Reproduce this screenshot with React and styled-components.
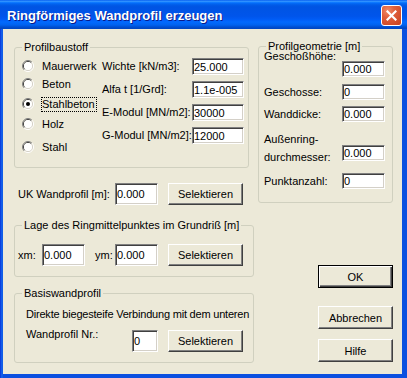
import React from 'react';
import styled, { createGlobalStyle } from 'styled-components';

const GlobalStyle = createGlobalStyle`
  html, body {
    margin: 0;
    padding: 0;
    background: #ffffff;
  }
  body {
    font-family: "Liberation Sans", Arial, sans-serif;
    font-size: 11px;
    color: #000;
  }
`;

const Window = styled.div`
  width: 407px;
  height: 378px;
  display: flex;
  flex-direction: column;
  background: linear-gradient(to right, #0831d9 0, #166aee 2px, #0b50e0 3px);
  box-sizing: border-box;
`;

const TitleBar = styled.div`
  height: 29px;
  flex: none;
  display: flex;
  align-items: center;
  justify-content: space-between;
  padding: 0 5px 0 7px;
  background: linear-gradient(
    to bottom,
    #0058ee 0%,
    #3593ff 4%,
    #288eff 6%,
    #127dff 8%,
    #036ffc 10%,
    #0262ee 14%,
    #0057e5 20%,
    #0054e3 24%,
    #0055eb 56%,
    #005bf5 66%,
    #026afe 76%,
    #0062ef 86%,
    #0052d6 92%,
    #0049c8 96%,
    #0046c0 100%
  );
`;

const Title = styled.span`
  color: #fff;
  font: bold 13px "Liberation Sans", Arial, sans-serif;
  text-shadow: 1px 1px 0 #0a1a8a;
  margin-top: 1px;
`;

const CloseButton = styled.div`
  width: 21px;
  height: 21px;
  box-sizing: border-box;
  border: 1px solid #fff;
  border-radius: 3px;
  background: radial-gradient(circle at 30% 25%, #f08c6a 0%, #e0603c 35%, #c8401f 100%);
  display: flex;
  align-items: center;
  justify-content: center;
  margin-top: 1px;
`;

const Client = styled.div`
  flex: 1;
  margin: 0 5px 4px 3px;
  background: #ece9d8;
  display: flex;
  gap: 4px;
  padding: 11px 0 0 11px;
`;

const LeftColumn = styled.div`
  width: 240px;
  display: flex;
  flex-direction: column;
  margin-top: 1px;
`;

const RightColumn = styled.div`
  width: 135px;
  display: flex;
  flex-direction: column;
`;

const Group = styled.fieldset`
  margin: ${p => p.$mt || 0}px 0 0 0;
  padding: 0;
  min-width: 0;
  box-sizing: border-box;
  width: ${p => p.$w}px;
  height: ${p => p.$h}px;
  border: 1px solid #d0d0bf;
  border-radius: 3px;
`;

const Legend = styled.legend`
  margin-left: 7px;
  padding: 0 2px;
  line-height: 13px;
  font-size: 11px;
`;

const MaterialBody = styled.div`
  display: flex;
  padding-left: 7px;
`;

const RadioList = styled.div`
  width: 80px;
  display: flex;
  flex-direction: column;
`;

const RadioRow = styled.div`
  height: 16px;
  margin-top: ${p => p.$mt}px;
  display: flex;
  align-items: center;
  gap: 7px;
`;

const RadioLabel = styled.span`
  line-height: 13px;
  border: 1px ${p => (p.$focus ? 'dotted #000' : 'solid transparent')};
  padding: 0 1px 0 0;
  white-space: nowrap;
`;

const FieldGrid = styled.div`
  display: grid;
  grid-template-columns: 90px 52px;
  grid-auto-rows: 17px;
  row-gap: 6px;
  margin-top: 4px;
  align-items: center;
`;

const Label = styled.span`
  line-height: 13px;
  white-space: nowrap;
`;

const Field = styled.input`
  box-sizing: border-box;
  width: ${p => p.$w || 43}px;
  height: ${p => p.$h || 17}px;
  margin: 0;
  padding: 0 0 0 1px;
  font: 11px "Liberation Sans", Arial, sans-serif;
  color: #000;
  background: #fff;
  border: 1px solid;
  border-color: #808080 #fff #fff #808080;
  box-shadow: inset 1px 1px 0 #404040, inset -1px -1px 0 #d4d0c8;
  outline: none;
`;

const GeoBody = styled.div`
  display: flex;
  flex-direction: column;
  padding-left: 5px;
`;

const GeoRow = styled.div`
  display: grid;
  grid-template-columns: 78px 43px;
  align-items: center;
  margin-top: ${p => p.$mt}px;
`;

const GeoLabel = styled.span`
  line-height: ${p => (p.$tall ? 18 : 13)}px;
  white-space: nowrap;
  align-self: ${p => (p.$up ? 'start' : 'center')};
  margin-top: ${p => (p.$up ? -11 : 0)}px;
`;

const GeoField = styled(Field)`
  align-self: ${p => (p.$tall ? 'end' : 'center')};
  margin-bottom: ${p => (p.$tall ? 5 : 0)}px;
`;

const LineRow = styled.div`
  display: flex;
  align-items: center;
  height: 22px;
  margin-top: ${p => p.$mt || 0}px;
  padding-left: ${p => p.$pl || 0}px;
`;

const RowLabel = styled.span`
  width: ${p => p.$w}px;
  flex: none;
  line-height: 13px;
  white-space: nowrap;
  align-self: ${p => (p.$top ? 'flex-start' : 'center')};
  margin-top: ${p => (p.$top ? -2 : 0)}px;
`;

const Spacer = styled.span`
  width: ${p => p.$w}px;
  flex: none;
`;

const Button = styled.button`
  box-sizing: border-box;
  width: 75px;
  height: ${p => p.$h || 22}px;
  margin: ${p => p.$mt || 0}px 0 0 0;
  padding: 0;
  flex: none;
  font: 11px "Liberation Sans", Arial, sans-serif;
  color: #000;
  background: #ece9d8;
  border: 1px solid;
  border-color: ${p => (p.$default ? '#000' : '#fff #404040 #404040 #fff')};
  box-shadow: ${p =>
    p.$default
      ? 'inset 1px 1px 0 #fff, inset -1px -1px 0 #404040, inset -2px -2px 0 #808080'
      : 'inset -1px -1px 0 #808080'};
  align-self: ${p => (p.$right ? 'flex-end' : 'auto')};
`;

const BasisBody = styled.div`
  display: flex;
  flex-direction: column;
  padding-left: 11px;
`;

const Text = styled.div`
  line-height: 13px;
  margin-top: 8px;
  letter-spacing: -0.2px;
  white-space: nowrap;
`;

function Radio({ checked }) {
  return (
    <svg width="12" height="12" viewBox="0 0 12 12">
      <path d="M2.1 9.9 A5.5 5.5 0 0 1 9.9 2.1" fill="none" stroke="#808080" />
      <path d="M9.9 2.1 A5.5 5.5 0 0 1 2.1 9.9" fill="none" stroke="#ffffff" />
      <path d="M2.8 9.2 A4.5 4.5 0 0 1 9.2 2.8" fill="none" stroke="#404040" />
      <path d="M9.2 2.8 A4.5 4.5 0 0 1 2.8 9.2" fill="none" stroke="#d4d0c8" />
      <circle cx="6" cy="6" r="4" fill="#ffffff" />
      {checked && <circle cx="6" cy="6" r="2" fill="#000" />}
    </svg>
  );
}

const materials = [
  { name: 'Mauerwerk', mt: 4 },
  { name: 'Beton', mt: 2 },
  { name: 'Stahlbeton', mt: 4, checked: true },
  { name: 'Holz', mt: 4 },
  { name: 'Stahl', mt: 7 },
];

const props = [
  { label: 'Wichte [kN/m3]:', value: '25.000' },
  { label: 'Alfa t [1/Grd]:', value: '1.1e-005' },
  { label: 'E-Modul [MN/m2]:', value: '30000' },
  { label: 'G-Modul [MN/m2]:', value: '12000' },
];

const geometry = [
  { label: 'Geschoßhöhe:', value: '0.000', mt: 8, up: true },
  { label: 'Geschosse:', value: '0', mt: 7 },
  { label: 'Wanddicke:', value: '0.000', mt: 6 },
  { label: 'Außenring-\ndurchmesser:', value: '0.000', mt: 8, tall: true },
  { label: 'Punktanzahl:', value: '0', mt: 7 },
];

export default function App() {
  return (
    <>
      <GlobalStyle />
      <Window>
        <TitleBar>
          <Title>Ringförmiges Wandprofil erzeugen</Title>
          <CloseButton>
            <svg width="11" height="11" viewBox="0 0 11 11">
              <path d="M1.5 1.5 L9.5 9.5 M9.5 1.5 L1.5 9.5" stroke="#fff" strokeWidth="2.2" strokeLinecap="square" />
            </svg>
          </CloseButton>
        </TitleBar>
        <Client>
          <LeftColumn>
            <Group $w={235} $h={127}>
              <Legend>Profilbaustoff</Legend>
              <MaterialBody>
                <RadioList>
                  {materials.map(m => (
                    <RadioRow key={m.name} $mt={m.mt}>
                      <Radio checked={m.checked} />
                      <RadioLabel $focus={m.checked}>{m.name}</RadioLabel>
                    </RadioRow>
                  ))}
                </RadioList>
                <FieldGrid>
                  {props.map(p => (
                    <React.Fragment key={p.label}>
                      <Label>{p.label}</Label>
                      <Field $w={52} readOnly value={p.value} />
                    </React.Fragment>
                  ))}
                </FieldGrid>
              </MaterialBody>
            </Group>

            <LineRow $mt={15} $pl={4}>
              <RowLabel $w={97}>UK Wandprofil [m]:</RowLabel>
              <Field $h={22} readOnly value="0.000" />
              <Spacer $w={10} />
              <Button>Selektieren</Button>
            </LineRow>

            <Group $w={240} $h={58} $mt={14}>
              <Legend>Lage des Ringmittelpunktes im Grundriß [m]</Legend>
              <LineRow $mt={12} $pl={3}>
                <RowLabel $w={24}>xm:</RowLabel>
                <Field $h={22} readOnly value="0.000" />
                <Spacer $w={10} />
                <RowLabel $w={20}>ym:</RowLabel>
                <Field $h={22} readOnly value="0.000" />
                <Spacer $w={10} />
                <Button>Selektieren</Button>
              </LineRow>
            </Group>

            <Group $w={240} $h={76} $mt={10}>
              <Legend>Basiswandprofil</Legend>
              <BasisBody>
                <Text>Direkte biegesteife Verbindung mit dem unteren</Text>
                <LineRow $mt={9}>
                  <RowLabel $w={106} $top>Wandprofil Nr.:</RowLabel>
                  <Field $w={26} $h={22} readOnly value="0" />
                  <Spacer $w={10} />
                  <Button>Selektieren</Button>
                </LineRow>
              </BasisBody>
            </Group>
          </LeftColumn>

          <RightColumn>
            <Group $w={135} $h={163}>
              <Legend>Profilgeometrie [m]</Legend>
              <GeoBody>
                {geometry.map(g => (
                  <GeoRow key={g.label} $mt={g.mt}>
                    <GeoLabel $up={g.up} $tall={g.tall}>
                      {g.label.split('\n').map(line => (
                        <div key={line}>{line}</div>
                      ))}
                    </GeoLabel>
                    <GeoField $w={43} $h={16} $tall={g.tall} readOnly value={g.value} />
                  </GeoRow>
                ))}
              </GeoBody>
            </Group>
            <Button $right $default $h={23} $mt={62}>OK</Button>
            <Button $right $h={23} $mt={18}>Abbrechen</Button>
            <Button $right $h={23} $mt={10}>Hilfe</Button>
          </RightColumn>
        </Client>
      </Window>
    </>
  );
}
